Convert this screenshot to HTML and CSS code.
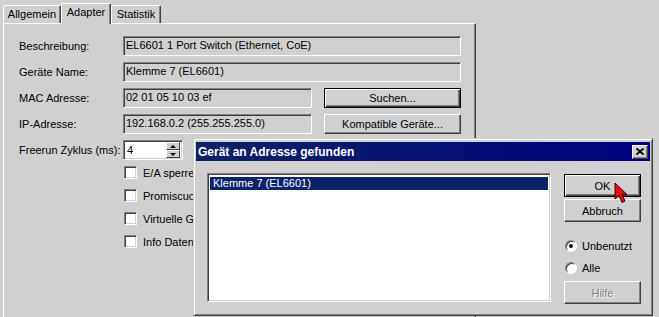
FILE: index.html
```html
<!DOCTYPE html>
<html lang="de">
<head>
    <meta charset="UTF-8">
    <title>Adapter</title>
    <link rel="stylesheet" href="styles.css">
</head>
<body>
<div class="screen">

    <div class="tabs">
        <div class="tab tab-first">Allgemein</div>
        <div class="tab tab-active">Adapter</div>
        <div class="tab">Statistik</div>
    </div>

    <div class="panel">
        <div class="form">
            <label class="lbl">Beschreibung:</label>
            <div class="field">EL6601 1 Port Switch (Ethernet, CoE)</div>

            <label class="lbl">Geräte Name:</label>
            <div class="field">Klemme 7 (EL6601)</div>

            <label class="lbl">MAC Adresse:</label>
            <div class="pair">
                <div class="field field-short">02 01 05 10 03 ef</div>
                <button class="btn btn-default btn-side">Suchen...</button>
            </div>

            <label class="lbl">IP-Adresse:</label>
            <div class="pair">
                <div class="field field-short">192.168.0.2 (255.255.255.0)</div>
                <button class="btn btn-side">Kompatible Geräte...</button>
            </div>

            <label class="lbl">Freerun Zyklus (ms):</label>
            <div class="spin">
                <span class="spin-value">4</span>
                <div class="spin-btns">
                    <span class="spin-btn"><i class="arrow-up"></i></span>
                    <span class="spin-btn"><i class="arrow-down"></i></span>
                </div>
            </div>

            <div class="checks">
                <label class="check"><span class="box"></span>E/A sperren</label>
                <label class="check"><span class="box"></span>Promiscuous Mode (Wireshark)</label>
                <label class="check"><span class="box"></span>Virtuelle Geräte-Schnittstelle</label>
                <label class="check"><span class="box"></span>Info Daten einblenden</label>
            </div>
        </div>
    </div>

    <!-- modal dialog on top of the property page -->
    <div class="dialog">
        <div class="titlebar">
            <span class="title">Gerät an Adresse gefunden</span>
            <span class="close">
                <svg width="8" height="7" viewBox="0 0 8 7"><path d="M0.5 0.5 L7.5 6.5 M7.5 0.5 L0.5 6.5" stroke="#000" stroke-width="1.8"/></svg>
            </span>
        </div>
        <div class="dlg-body">
            <div class="listbox">
                <div class="item item-selected">Klemme 7 (EL6601)</div>
            </div>
            <div class="dlg-side">
                <button class="btn btn-default btn-dlg">OK</button>
                <button class="btn btn-dlg btn-abort">Abbruch</button>
                <label class="radio-row radio-first"><span class="radio radio-on"></span>Unbenutzt</label>
                <label class="radio-row"><span class="radio"></span>Alle</label>
                <button class="btn btn-dlg btn-help" disabled>Hilfe</button>
            </div>
        </div>
    </div>

    <svg class="cursor" width="14" height="22" viewBox="0 0 14 22">
        <path d="M1 1 L1 17 L5 13.5 L8 20.5 L11 19 L8 12.5 L13 12.5 Z" fill="#e81010" stroke="#3a0000" stroke-width="1" stroke-linejoin="round"/>
    </svg>

</div>
</body>
</html>
```

FILE: styles.css
```css
html, body {
    margin: 0;
    padding: 0;
}
*, *:before, *:after {
    box-sizing: border-box;
}
body {
    font-family: 'Liberation Sans', Arial, sans-serif;
    font-size: 11px;
    color: #000;
    background: #d0d0d0;
}
.screen {
    position: relative;
    width: 659px;
    height: 317px;
    overflow: hidden;
    background: #d0d0d0;
}

/* Tabs */
.tabs {
    display: flex;
    align-items: flex-end;
    height: 23px;
    padding-left: 3px;
    position: relative;
    z-index: 2;
}
.tab {
    width: 50px;
    height: 18px;
    line-height: 16px;
    text-align: center;
    border-top: 1px solid #fff;
    border-left: 1px solid #fff;
    border-right: 1px solid #404040;
    box-shadow: inset -1px 0 #808080;
    border-radius: 2px 2px 0 0;
}
.tab-first {
    width: 58px;
}
.tab-active {
    height: 21px;
    margin-bottom: -1px;
    line-height: 17px;
    background: #d0d0d0;
}

/* Property page */
.panel {
    margin-left: 3px;
    width: 473px;
    height: 300px;
    border-top: 1px solid #fff;
    border-left: 1px solid #fff;
    border-right: 1px solid #404040;
    box-shadow: inset -1px 0 #808080;
    padding: 12px 0 0 15px;
}
.form {
    display: grid;
    grid-template-columns: 104px 338px;
    grid-auto-rows: 20px;
    row-gap: 6px;
    align-items: center;
}
.lbl {
    line-height: 20px;
    white-space: nowrap;
}
.field {
    height: 20px;
    line-height: 17px;
    padding-left: 2px;
    white-space: nowrap;
    overflow: hidden;
    border: 1px solid;
    border-color: #808080 #fff #fff #808080;
    box-shadow: inset 1px 1px #404040;
}
.pair {
    display: flex;
    gap: 12px;
}
.field-short {
    width: 189px;
}

/* Buttons */
.btn {
    font: inherit;
    color: #000;
    background: #d0d0d0;
    padding: 0;
    border: 1px solid;
    border-color: #fff #404040 #404040 #fff;
    box-shadow: inset -1px -1px #808080;
}
.btn-default {
    border-color: #000;
    box-shadow: inset 1px 1px #fff, inset -1px -1px #404040, inset -2px -2px #808080;
}
.btn-side {
    width: 137px;
    height: 20px;
}

/* Spin box */
.spin {
    width: 60px;
    height: 20px;
    display: flex;
    justify-content: space-between;
    background: #fff;
    border: 1px solid;
    border-color: #808080 #fff #fff #808080;
    box-shadow: inset 1px 1px #404040, inset -1px -1px #d0d0d0;
    padding: 1px 2px 1px 3px;
}
.spin-value {
    line-height: 17px;
}
.spin-btns {
    display: flex;
    flex-direction: column;
    width: 14px;
}
.spin-btn {
    flex: 1;
    display: flex;
    align-items: center;
    justify-content: center;
    background: #d0d0d0;
    border: 1px solid;
    border-color: #fff #404040 #404040 #fff;
}
.arrow-up, .arrow-down {
    width: 0;
    height: 0;
    border-left: 3px solid transparent;
    border-right: 3px solid transparent;
}
.arrow-up {
    border-bottom: 3px solid #000;
}
.arrow-down {
    border-top: 3px solid #000;
}

/* Checkboxes */
.checks {
    grid-column: 2;
    align-self: start;
    display: flex;
    flex-direction: column;
    gap: 10px;
}
.check {
    display: flex;
    align-items: center;
    height: 13px;
    gap: 6px;
    padding-left: 1px;
    white-space: nowrap;
}
.box {
    width: 13px;
    height: 13px;
    background: #fff;
    border: 1px solid;
    border-color: #808080 #fff #fff #808080;
    box-shadow: inset 1px 1px #404040, inset -1px -1px #d0d0d0;
}

/* Dialog */
.dialog {
    position: absolute;
    left: 193px;
    top: 138px;
    width: 460px;
    height: 178px;
    background: #d0d0d0;
    border: 1px solid;
    border-color: #d0d0d0 #404040 #404040 #d0d0d0;
    box-shadow: inset 1px 1px #fff, inset -1px -1px #808080;
    padding: 3px 2px 2px 2px;
    z-index: 5;
}
.titlebar {
    height: 19px;
    display: flex;
    justify-content: space-between;
    align-items: center;
    padding: 0 2px 0 2px;
    background: linear-gradient(90deg, #0c2466, #00007e);
}
.title {
    font-size: 12px;
    font-weight: bold;
    color: #fff;
    line-height: 20px;
}
.close {
    width: 16px;
    height: 14px;
    display: flex;
    align-items: center;
    justify-content: center;
    background: #d0d0d0;
    border: 1px solid;
    border-color: #fff #404040 #404040 #fff;
    box-shadow: inset -1px -1px #808080;
}
.dlg-body {
    display: flex;
    gap: 13px;
    padding: 12px 0 0 11px;
}
.listbox {
    width: 344px;
    height: 129px;
    background: #fff;
    border: 1px solid;
    border-color: #808080 #fff #fff #808080;
    box-shadow: inset 1px 1px #404040, inset -1px -1px #d0d0d0;
    padding: 2px 2px 0 2px;
}
.item {
    height: 13px;
    line-height: 13px;
    padding-left: 3px;
    margin-top: 1px;
}
.item-selected {
    background: #0a246a;
    color: #fff;
}
.dlg-side {
    width: 77px;
    display: flex;
    flex-direction: column;
    padding-top: 1px;
}
.btn-dlg {
    height: 23px;
}
.btn-abort {
    margin-top: 2px;
}
.radio-row {
    display: flex;
    align-items: center;
    gap: 5px;
    height: 13px;
    padding-left: 1px;
    margin-top: 9px;
}
.radio-first {
    margin-top: 17px;
}
.radio {
    position: relative;
    width: 12px;
    height: 12px;
    border-radius: 50%;
    background: #fff;
    border: 1px solid;
    border-color: #808080 #fff #fff #808080;
    box-shadow: inset 1px 1px #404040;
}
.radio-on:after {
    content: '';
    position: absolute;
    left: 3px;
    top: 3px;
    width: 4px;
    height: 4px;
    border-radius: 50%;
    background: #000;
}
.btn-help {
    margin-top: 7px;
    color: #808080;
    text-shadow: 1px 1px #fff;
}

.cursor {
    position: absolute;
    left: 614px;
    top: 182px;
    z-index: 10;
}
```
